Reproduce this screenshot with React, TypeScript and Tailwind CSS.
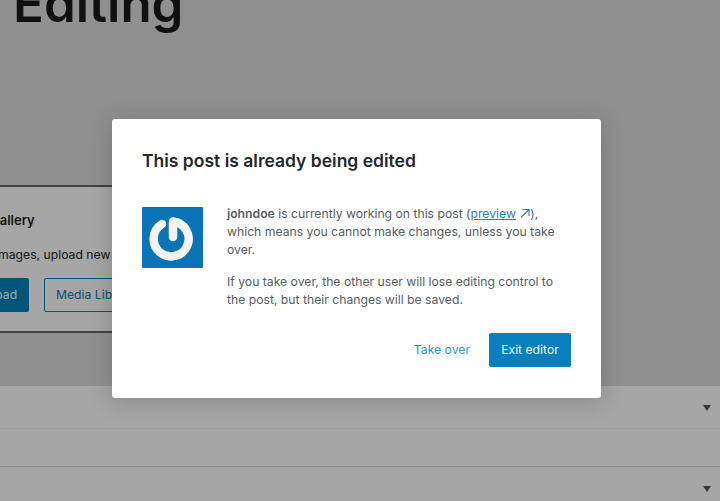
import React from 'react';

const ChevronDown = () => (
  <svg width="8" height="6" viewBox="0 0 8 6" className="fill-[#555]">
    <path d="M0 0h8L4 6z" />
  </svg>
);

const GravatarLogo = () => (
  <div className="w-[61px] h-[61px] shrink-0 rounded-[1px] bg-[#0a74b6] flex items-center justify-center">
    <svg width="61" height="61" viewBox="0 0 61 61" fill="none">
      <path
        d="M31 30V14.500A17.500 17.500 0 1 1 20 17"
        stroke="#f4f4f4"
        strokeWidth="8.500"
        strokeLinecap="round"
        strokeLinejoin="round"
      />
    </svg>
  </div>
);

const GalleryBlock = () => (
  <div className="-ml-[60px] mt-[165px] w-[600px] h-[148px] bg-white border-y-2 border-[#666] pl-6 pt-[26px] whitespace-nowrap">
    <div className="flex items-center gap-[2px] h-4 text-[13px] font-semibold text-[#1e1e1e]">
      <span className="w-6" />
      <span>Gallery</span>
    </div>
    <p className="mt-[18px] h-4 text-[12.200px] leading-4 text-[#1e1e1e]">
      Drag images, upload new ones or select files from your library.
    </p>
    <div className="mt-[15px] flex gap-[15px]">
      <button className="w-[65px] h-[34px] rounded-[2px] bg-[#0083b8] text-white text-[12.200px]">Upload</button>
      <button className="w-[120px] h-[34px] rounded-[2px] border border-[#0083b8] bg-white px-[11px] text-left text-[#0083b8] text-[12.200px]">
        Media Library
      </button>
    </div>
  </div>
);

const SettingsRows = () => (
  <div className="mt-[53px] bg-white text-[#555]">
    <div className="h-[43px] border-b border-[#f2f2f2] flex items-center justify-end pr-[9px] pt-[2px]">
      <ChevronDown />
    </div>
    <div className="h-[38px] border-b border-[#d8d8d8]" />
    <div className="h-[34px] flex items-center justify-end pr-[9px] pt-[10px]">
      <ChevronDown />
    </div>
  </div>
);

const TakeoverDialog = () => (
  <div className="absolute inset-0 bg-black/35 flex">
    <div className="mt-[119px] ml-[112px] w-[489px] h-[279px] bg-white rounded-[3px] shadow-[0_3px_24px_rgba(0,0,0,0.2)] px-[30px] text-[#555d66]">
      <h1 className="mt-[31px] h-[22px] text-[17.500px] leading-[22px] font-semibold text-[#23282d]">
        This post is already being edited
      </h1>
      <div className="mt-[35px] flex gap-[24px]">
        <GravatarLogo />
        <div className="text-[12.200px] leading-[18px] -mt-[2px]">
          <p>
            <strong className="font-semibold">johndoe</strong> is currently working on this post (
            <a className="text-[#2a7fb8] underline">preview</a>{' '}
            <svg width="11" height="11" viewBox="0 0 11 11" fill="none" className="inline-block mb-[2px] stroke-[#2a7fb8]">
              <path d="M2 9.500 9.500 2M3.500 1.500h6.500v6.500" strokeWidth="1.100" />
            </svg>
            ), which means you cannot make changes, unless you take over.
          </p>
          <p className="mt-[14px]">
            If you take over, the other user will lose editing control to the post, but their changes will be saved.
          </p>
        </div>
      </div>
      <div className="mt-[24px] flex items-center justify-end gap-[19px] text-[12.200px]">
        <a className="text-[#2f97cb]">Take over</a>
        <button className="w-[82px] h-[34px] rounded-[2px] bg-[#0a7fbe] text-[#f0f6fa]">Exit editor</button>
      </div>
    </div>
  </div>
);

export default function App() {
  return (
    <div className="relative w-[720px] h-[501px] overflow-hidden bg-[#dedede] font-['Inter',sans-serif]">
      <div className="h-[20px] ml-[13px] flex items-end">
        <span className="text-[51px] leading-none font-semibold text-[#191919] -mb-[9px]">Editing</span>
      </div>
      <GalleryBlock />
      <SettingsRows />
      <TakeoverDialog />
    </div>
  );
}
